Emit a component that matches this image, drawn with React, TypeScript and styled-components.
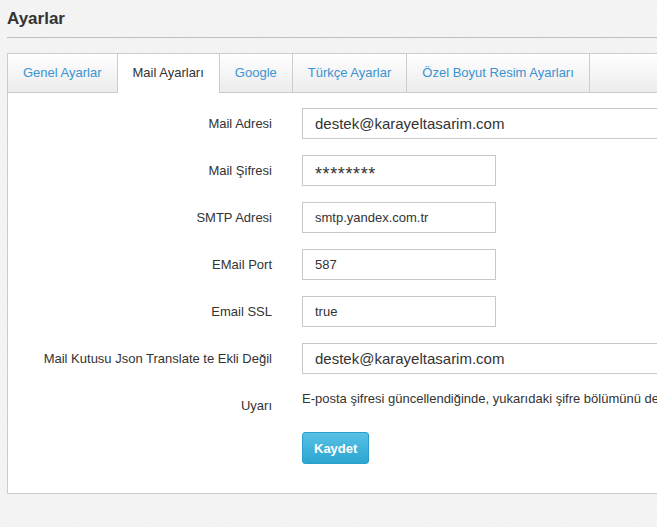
import React, { useState } from "react";
import styled, { createGlobalStyle } from "styled-components";

const GlobalStyle = createGlobalStyle`
  html, body {
    margin: 0;
    padding: 0;
    overflow: hidden;
  }
  body {
    font-family: "Liberation Sans", Arial, sans-serif;
    background-color: #f4f4f4;
    background-image: repeating-linear-gradient(
      135deg,
      rgba(0, 0, 0, 0.012) 0px,
      rgba(0, 0, 0, 0.012) 1px,
      transparent 1px,
      transparent 3px
    );
    color: #333;
  }
`;

const Page = styled.div`
  width: 760px;
  padding-left: 7px;
`;

const Heading = styled.h2`
  margin: 0;
  padding: 9px 0 8px;
  font-size: 17px;
  line-height: 20px;
  font-weight: bold;
  color: #333;
  border-bottom: 1px solid #bdbdbd;
`;

const Panel = styled.div`
  margin-top: 15px;
  background: #fff;
  border: 1px solid #cccccc;
  padding-bottom: 29px;
`;

const TabBar = styled.div`
  display: flex;
  height: 38px;
  background: linear-gradient(#ffffff, #ececec);
  border-bottom: 1px solid #cccccc;
`;

const Tab = styled.div<{ $active?: boolean }>`
  padding: 0 15px;
  line-height: 38px;
  font-size: 13px;
  white-space: nowrap;
  border-right: 1px solid #cccccc;
  color: ${p => (p.$active ? "#333" : "#3a93d3")};
  background: ${p => (p.$active ? "#fff" : "transparent")};
  height: ${p => (p.$active ? "39px" : "38px")};
  cursor: pointer;
`;

const Form = styled.div`
  display: grid;
  grid-template-columns: 264px 1fr;
  column-gap: 30px;
  row-gap: 16px;
  padding-top: 15px;
`;

const Label = styled.label<{ $top?: boolean }>`
  text-align: right;
  font-size: 13px;
  line-height: 18px;
  color: #333;
  align-self: ${p => (p.$top ? "start" : "center")};
  padding-top: ${p => (p.$top ? "7px" : "0")};
`;

const Input = styled.input<{ $wide?: boolean; $big?: boolean; $secret?: boolean }>`
  display: block;
  box-sizing: border-box;
  width: ${p => (p.$wide ? "430px" : "194px")};
  height: 31px;
  padding: ${p => (p.$secret ? "7px 12px 0" : "0 12px")};
  border: 1px solid #c8c8c8;
  border-radius: 0;
  font-family: "Liberation Sans", Arial, sans-serif;
  font-size: ${p => (p.$secret ? "18px" : p.$big ? "15px" : "13px")};
  letter-spacing: ${p => (p.$secret ? "0.6px" : "0")};
  color: #333;
  background: #fff;
  outline: none;
`;

const Note = styled.p`
  margin: 0;
  font-size: 13px;
  line-height: 18px;
  white-space: nowrap;
  color: #333;
`;

const Actions = styled.div`
  grid-column: 2;
  padding-top: 1px;
`;

const SaveButton = styled.button`
  display: block;
  height: 32px;
  padding: 0 11px;
  font-family: "Liberation Sans", Arial, sans-serif;
  font-size: 13px;
  font-weight: bold;
  color: #fff;
  background: linear-gradient(#58c1e4, #2ba5d1);
  border: 1px solid #2a9fcb;
  border-radius: 3px;
  cursor: pointer;
`;

const tabs = ["Genel Ayarlar", "Mail Ayarları", "Google", "Türkçe Ayarlar", "Özel Boyut Resim Ayarları"];

type Field = {
  label: string;
  value: string;
  wide?: boolean;
  big?: boolean;
  secret?: boolean;
};

const fields: Field[] = [
  { label: "Mail Adresi", value: "destek@karayeltasarim.com", wide: true, big: true },
  { label: "Mail Şifresi", value: "********", secret: true },
  { label: "SMTP Adresi", value: "smtp.yandex.com.tr" },
  { label: "EMail Port", value: "587" },
  { label: "Email SSL", value: "true" },
  { label: "Mail Kutusu Json Translate te Ekli Değil", value: "destek@karayeltasarim.com", wide: true, big: true },
];

const App: React.FC = () => {
  const [active, setActive] = useState(1);

  return (
    <>
      <GlobalStyle />
      <Page>
        <Heading>Ayarlar</Heading>
        <Panel>
          <TabBar>
            {tabs.map((t, i) => (
              <Tab key={t} $active={i === active} onClick={() => setActive(i)}>
                {t}
              </Tab>
            ))}
          </TabBar>
          <Form>
            {fields.map(f => (
              <React.Fragment key={f.label}>
                <Label>{f.label}</Label>
                <div>
                  <Input defaultValue={f.value} $wide={f.wide} $big={f.big} $secret={f.secret} />
                </div>
              </React.Fragment>
            ))}
            <Label $top>Uyarı</Label>
            <Note>
              E-posta şifresi güncellendiğinde, yukarıdaki şifre bölümünü de güncelleyiniz.
            </Note>
            <Actions>
              <SaveButton>Kaydet</SaveButton>
            </Actions>
          </Form>
        </Panel>
      </Page>
    </>
  );
};

export default App;
